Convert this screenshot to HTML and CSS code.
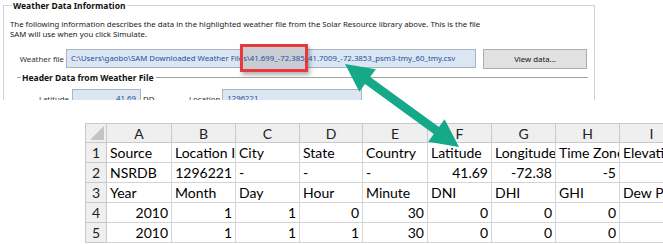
FILE: index.html
```html
<!DOCTYPE html>
<html lang="en">
<head>
    <meta charset="UTF-8">
    <title>Weather Data Information</title>
    <link rel="stylesheet" href="styles.css">
</head>
<body>
    <div class="page">
        <section class="sam">
            <fieldset class="group">
                <legend>Weather Data Information</legend>
                <p class="intro">The following information describes the data in the highlighted weather file from the Solar Resource library above. This is the file<br>SAM will use when you click Simulate.</p>
                <div class="file-row">
                    <label class="lbl">Weather file</label>
                    <div class="field path">C:\Users\gaobo\SAM Downloaded Weather File<span class="mark">s\41.699_-72.385</span>_41.7009_-72.3853_psm3-tmy_60_tmy.csv</div>
                    <button class="btn">View data...</button>
                </div>
                <div class="subhead"><span>Header Data from Weather File</span></div>
                <div class="meta-row">
                    <label class="lbl lat">Latitude</label>
                    <div class="field num">41.69</div>
                    <span class="unit">DD</span>
                    <label class="lbl loc-lbl">Location</label>
                    <div class="field loc">1296221</div>
                </div>
            </fieldset>
        </section>

        <div class="sheet">
            <table>
                <colgroup>
                    <col style="width:21px"><col style="width:65px"><col style="width:64px"><col style="width:64px"><col style="width:63px">
                    <col style="width:65px"><col style="width:64px"><col style="width:64px"><col style="width:64px"><col style="width:64px">
                </colgroup>
                <tr class="cols">
                    <th class="corner"><span class="tri"></span></th>
                    <th>A</th><th>B</th><th>C</th><th>D</th><th>E</th><th>F</th><th>G</th><th>H</th><th>I</th>
                </tr>
                <tr>
                    <th class="rn">1</th>
                    <td>Source</td><td>Location ID</td><td>City</td><td>State</td><td>Country</td><td>Latitude</td><td>Longitude</td><td>Time Zone</td><td>Elevation</td>
                </tr>
                <tr>
                    <th class="rn">2</th>
                    <td>NSRDB</td><td class="n">1296221</td><td>-</td><td>-</td><td>-</td><td class="n">41.69</td><td class="n">-72.38</td><td class="n">-5</td><td class="n">1</td>
                </tr>
                <tr>
                    <th class="rn">3</th>
                    <td>Year</td><td>Month</td><td>Day</td><td>Hour</td><td>Minute</td><td>DNI</td><td>DHI</td><td>GHI</td><td>Dew Point</td>
                </tr>
                <tr>
                    <th class="rn">4</th>
                    <td class="n">2010</td><td class="n">1</td><td class="n">1</td><td class="n">0</td><td class="n">30</td><td class="n">0</td><td class="n">0</td><td class="n">0</td><td></td>
                </tr>
                <tr>
                    <th class="rn">5</th>
                    <td class="n">2010</td><td class="n">1</td><td class="n">1</td><td class="n">1</td><td class="n">30</td><td class="n">0</td><td class="n">0</td><td class="n">0</td><td></td>
                </tr>
            </table>
        </div>

        <!-- annotation arrow linking the file name to the Latitude column -->
        <svg class="arrow" width="663" height="244" viewBox="0 0 663 244">
            <polygon points="345,64 359.4,91.8 365,84.1 433.8,134.1 428.2,141.8 459,147 444.6,119.2 439,126.9 370.2,76.9 375.8,69.2"/>
        </svg>
    </div>
</body>
</html>
```

FILE: styles.css
```css
body { margin: 0; background: #fff; font-family: Lato, "Liberation Sans", sans-serif; }
.page { position: relative; width: 663px; height: 244px; overflow: hidden; }

/* SAM dialog strip */
.sam { height: 100px; overflow: hidden; font-family: "Noto Sans", "Liberation Sans", sans-serif; font-size: 7.8px; color: #1a1a1a; }
.group {
    margin: 0 0 0 3px; width: 592px; min-height: 130px; box-sizing: border-box;
    border: 1px solid #d2d2d2; padding: 0 6px;
}
.group legend { font-weight: bold; font-size: 8.5px; line-height: 11px; padding: 0 1px; margin-left: 2px; color: #111; }
.intro { margin: 8px 0 0; line-height: 10px; }

.file-row { display: flex; align-items: center; margin-top: 9px; height: 21px; }
.lbl { display: block; text-align: right; color: #333; }
.file-row .lbl { width: 54px; margin-right: 2px; }
.field {
    box-sizing: border-box; height: 19px; line-height: 17px; padding: 0 4px;
    background: #dce6f2; border: 1px solid #a9b4c2; color: #24519b; white-space: nowrap;
}
.path { width: 410px; font-size: 7.8px; }
.mark {
    background: #c9cdd3; padding: 6px 0;
    box-shadow: 0 0 0 3px #e5393b, 2px 3px 4px 3px rgba(0, 0, 0, 0.3);
}
.btn {
    margin-left: 7px; width: 104px; height: 20px; padding: 0;
    background: #e1e1e1; border: 1px solid #adadad; font: inherit; color: #111;
}

.subhead { display: flex; align-items: center; margin-top: 3px; padding-left: 7px; height: 11px; font-weight: bold; font-size: 8.5px; color: #111; }
.subhead::before { content: ""; width: 4px; border-top: 1px solid #a0a0a0; margin-right: 1px; }
.subhead::after { content: ""; flex: 1; border-top: 1px solid #a0a0a0; margin-left: 2px; }

.meta-row { display: flex; align-items: flex-start; margin-top: 6px; height: 20px; }
.meta-row .lat { width: 59px; margin-right: 3px; padding-top: 5px; }
.num { width: 69px; text-align: right; }
.unit { margin-left: 2px; padding-top: 5px; width: 46px; }
.meta-row .loc-lbl { margin-right: 2px; padding-top: 5px; }
.loc { width: 140px; height: 20px; }

/* spreadsheet */
.sheet { margin-top: 23px; padding-left: 85px; }
table { border-collapse: collapse; table-layout: fixed; width: 598px; font-size: 14px; color: #000; }
th, td { border: 1px solid #d4d4d4; padding: 0 3px; height: 19px; overflow: hidden; white-space: nowrap; }
td { text-align: left; font-weight: normal; }
td.n { text-align: right; }
.cols th { height: 18px; background: #efefef; border-color: #c9c9c9; font-weight: normal; text-align: center; color: #222; }
th.rn { background: #efefef; border-color: #c9c9c9; font-weight: normal; text-align: center; color: #222; padding: 0; }
.corner { position: relative; padding: 0; }
.tri {
    position: absolute; right: 2px; bottom: 2px; width: 0; height: 0;
    border-left: 14px solid transparent; border-bottom: 14px solid #c4c4c4;
}

.arrow { position: absolute; left: 0; top: 0; pointer-events: none; }
.arrow polygon { fill: #15a98a; }
```
